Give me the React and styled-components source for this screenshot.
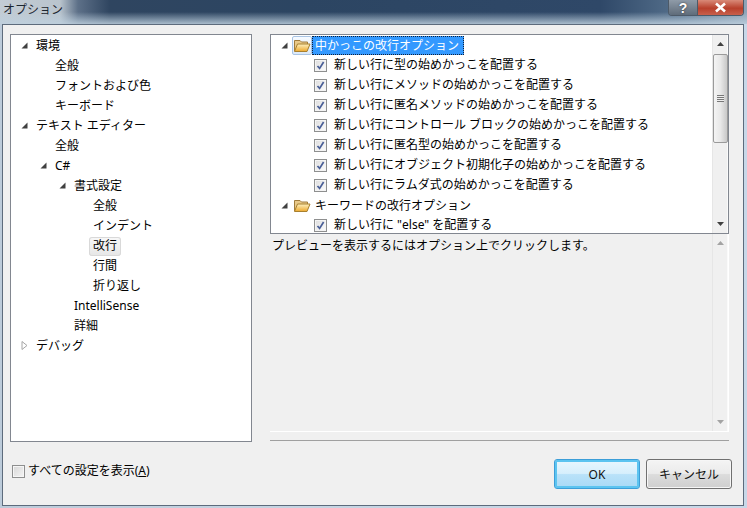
import React from "react";
import styled, { createGlobalStyle } from "styled-components";

const GlobalStyle = createGlobalStyle`
  html, body {
    margin: 0;
    padding: 0;
    background: #c4d4e4;
  }
  * {
    box-sizing: border-box;
  }
`;

const FONT = `"Noto Sans", "Noto Sans CJK JP", sans-serif`;

const StWindow = styled.div`
  width: 747px;
  height: 508px;
  display: flex;
  flex-direction: column;
  overflow: hidden;
  font-family: ${FONT};
  font-size: 12px;
  color: #000;
  background: linear-gradient(90deg, #bccbda 0%, #c6d4e2 40%, #c8d8e8 100%);
`;

const StTitleBar = styled.div`
  height: 24px;
  flex: none;
  display: flex;
  justify-content: space-between;
  background:
    linear-gradient(180deg, rgba(200, 214, 226, 0) 50%, rgba(190, 208, 222, 0.85) 100%),
    linear-gradient(90deg, #c3ccd4 0px, #b9c4cd 60px, #5d7088 78px, #2f4560 110px, #2c4562 300px, #2f4868 600px, #55708c 680px, #8fa5b8 747px);
`;

const StTitle = styled.div`
  padding: 1px 0 0 3px;
  font-size: 12px;
  line-height: 17px;
  color: #1c2630;
`;

const StCaption = styled.div`
  display: flex;
  height: 16px;
  margin-right: 3px;
  border: 1px solid #4d5a68;
  border-top: none;
  border-radius: 0 0 4px 4px;
  overflow: hidden;
`;

const StCaptionBtn = styled.div`
  width: ${(p) => p.$w}px;
  display: flex;
  align-items: center;
  justify-content: center;
  color: #fff;
  font-family: "Liberation Sans", sans-serif;
  font-weight: 700;
  font-size: 14px;
  line-height: 14px;
  text-shadow: 0 0 2px #333;
  background: ${(p) => p.$bg};
  & + & {
    border-left: 1px solid #4d5a68;
  }
`;

const StFrame = styled.div`
  height: 482px;
  margin: 0 3px 0 2px;
  border: 1px solid #5d6b7c;
  background: #f0f0f0;
  padding: 9px 13px 0 7px;
  display: flex;
  flex-direction: column;
`;

const StMain = styled.div`
  display: flex;
  gap: 18px;
  height: 408px;
  flex: none;
`;

const StTree = styled.div`
  width: 242px;
  flex: none;
  background: #fff;
  border: 1px solid #828790;
`;

const StTreeRow = styled.div`
  height: 20px;
  display: flex;
  align-items: center;
  padding-left: ${(p) => p.$level * 19 + 10}px;
  white-space: nowrap;
`;

const StArrowSlot = styled.span`
  width: 15px;
  flex: none;
  display: flex;
  align-items: center;
`;

const StTreeLabel = styled.span`
  align-self: flex-start;
  height: 19px;
  margin: 2px 0 0 -4px;
  padding: 0 4px;
  line-height: 18px;
  border-radius: 3px;
  ${(p) =>
    p.$selected &&
    `
    background: linear-gradient(180deg, #f8f8f8, #e6e6e6);
    box-shadow: inset 0 0 0 1px #d9d9d9;
  `}
`;

const StRight = styled.div`
  width: 459px;
  flex: none;
  display: flex;
  flex-direction: column;
`;

const StListBox = styled.div`
  height: 200px;
  flex: none;
  display: flex;
  background: #fff;
  border: 1px solid #828790;
`;

const StListBody = styled.div`
  flex: 1;
  overflow: hidden;
`;

const StGroupRow = styled.div`
  height: 20px;
  display: flex;
  align-items: center;
  padding-left: 10px;
  white-space: nowrap;
`;

const StFolderBox = styled.span`
  width: 20px;
  height: 19px;
  margin-left: 4px;
  flex: none;
  align-self: flex-end;
  display: flex;
  align-items: center;
  justify-content: center;
  border: 1px solid transparent;
  border-radius: 2px;
  ${(p) =>
    p.$selected &&
    `
    border-color: #a9c4e4;
    background: linear-gradient(180deg, #f6faff, #dbe9f9);
  `}
`;

const StGroupLabel = styled.span`
  height: 19px;
  align-self: flex-end;
  line-height: 20px;
  padding: 0 3px;
  ${(p) =>
    p.$selected &&
    `
    width: 152px;
    color: #fff;
    background: #3399ff;
    outline: 1px dotted #10203a;
    outline-offset: -1px;
  `}
`;

const StOptionRow = styled.div`
  height: 20px;
  display: flex;
  align-items: center;
  padding-left: 43px;
  gap: 7px;
  white-space: nowrap;
`;

const StOptionText = styled.span`
  line-height: 16px;
  margin-bottom: 1px;
`;

const StCheck = styled.span`
  width: 13px;
  height: 13px;
  flex: none;
  display: flex;
  align-items: center;
  justify-content: center;
  border: 1px solid #8e8f8f;
  background: linear-gradient(135deg, #dcdcdc, #f4f4f4 70%, #fff);
  box-shadow: inset 0 0 0 1px #f4f4f4;
`;

const StScrollBar = styled.div`
  width: 16px;
  flex: none;
  display: flex;
  flex-direction: column;
  align-items: center;
  background: #f0f0f0;
  border-left: 1px solid #e6e6e6;
  box-shadow: inset -1px 0 0 #fafafa;
`;

const StScrollBtn = styled.div`
  height: 18px;
  flex: none;
  width: 100%;
  display: flex;
  align-items: center;
  justify-content: center;
`;

const StThumb = styled.div`
  width: 15px;
  height: 89px;
  margin-top: 1px;
  flex: none;
  display: flex;
  align-items: center;
  justify-content: center;
  border: 1px solid #9a9a9a;
  border-radius: 2px;
  background: linear-gradient(90deg, #f4f4f4, #e8e8e8 50%, #c8c8c8);
`;

const StGrip = styled.div`
  width: 7px;
  height: 7px;
  background: repeating-linear-gradient(180deg, #777 0 1px, #eee 1px 2px);
`;

const StTrack = styled.div`
  flex: 1;
`;

const StPreview = styled.div`
  height: 198px;
  flex: none;
  display: flex;
  border-bottom: 1px solid #fff;
  border-right: 1px solid #fff;
`;

const StPreviewText = styled.div`
  flex: 1;
  padding: 3px 0 0 2px;
  line-height: 18px;
`;

const StRule = styled.div`
  height: 1px;
  flex: none;
  margin-top: 8px;
  background: #a0a0a0;
`;

const StFooter = styled.div`
  display: flex;
  align-items: flex-start;
  justify-content: space-between;
  padding: 17px 0 0 2px;
  margin-right: -2px;
  flex: 1;
`;

const StShowAll = styled.div`
  display: flex;
  align-items: center;
  gap: 3px;
  height: 14px;
  margin-top: 5px;
  white-space: nowrap;
`;

const StShowAllLabel = styled.span`
  margin-bottom: 2px;
`;

const StBlankCheck = styled.span`
  width: 13px;
  height: 13px;
  flex: none;
  border: 1px solid #8e8f8f;
  background: linear-gradient(135deg, #d8d8d8, #f4f4f4);
  box-shadow: inset 0 0 0 1px #f6f6f6;
`;

const StButtons = styled.div`
  display: flex;
  gap: 6px;
`;

const StButton = styled.button`
  width: 86px;
  height: 30px;
  padding: 0;
  font-family: ${FONT};
  font-size: 12px;
  color: #111;
  border-radius: 3px;
  border: 1px solid ${(p) => (p.$primary ? "#3c9ed8" : "#707070")};
  background: ${(p) =>
    p.$primary
      ? "linear-gradient(180deg, #e9f7fe 0%, #d6effc 48%, #b9e2f9 52%, #a8d9f6 100%)"
      : "linear-gradient(180deg, #f4f4f4 0%, #ebebeb 48%, #dcdcdc 52%, #cfcfcf 100%)"};
  box-shadow: ${(p) =>
    p.$primary ? "inset 0 0 0 2px #5cc4f0" : "inset 0 0 0 1px #f6f6f6"};
`;

const Expanded = () => (
  <svg width="7" height="7" viewBox="0 0 7 7">
    <polygon points="6.5,0.5 6.5,6.5 0.5,6.5" fill="#404040" />
  </svg>
);

const Collapsed = () => (
  <svg width="7" height="9" viewBox="0 0 7 9">
    <polygon points="1,0.5 6,4.5 1,8.5" fill="#fff" stroke="#a6a6a6" />
  </svg>
);

const Folder = ({ id }) => (
  <svg width="18" height="15" viewBox="0 0 18 15">
    <defs>
      <linearGradient id={id} x1="0" y1="0" x2="0" y2="1">
        <stop offset="0" stopColor="#fdf0c0" />
        <stop offset="1" stopColor="#eda92e" />
      </linearGradient>
    </defs>
    <path d="M1.5 13V2.5H7L8.5 4H14.5V6" fill="#e8c98a" stroke="#a07c3c" />
    <path d="M1.5 13.5L4.5 6H17L14 13.5Z" fill={`url(#${id})`} stroke="#a8802e" />
  </svg>
);

const Tick = () => (
  <svg width="9" height="9" viewBox="0 0 9 9">
    <path d="M1.5 5L3.6 7.4L7.6 1" fill="none" stroke="#4a5f97" strokeWidth="1.7" />
  </svg>
);

const CloseGlyph = () => (
  <svg width="13" height="11" viewBox="0 0 13 11">
    <path d="M2 1.5L11 9.5M11 1.5L2 9.5" stroke="#fff" strokeWidth="2.6" />
  </svg>
);

const ScrollArrow = ({ up, color }) => (
  <svg width="7" height="4" viewBox="0 0 7 4">
    <polygon points={up ? "3.5,0 7,4 0,4" : "0,0 7,0 3.5,4"} fill={color} />
  </svg>
);

const treeItems = [
  { label: "環境", level: 0, arrow: "open" },
  { label: "全般", level: 1 },
  { label: "フォントおよび色", level: 1 },
  { label: "キーボード", level: 1 },
  { label: "テキスト エディター", level: 0, arrow: "open" },
  { label: "全般", level: 1 },
  { label: "C#", level: 1, arrow: "open" },
  { label: "書式設定", level: 2, arrow: "open" },
  { label: "全般", level: 3 },
  { label: "インデント", level: 3 },
  { label: "改行", level: 3, selected: true },
  { label: "行間", level: 3 },
  { label: "折り返し", level: 3 },
  { label: "IntelliSense", level: 2 },
  { label: "詳細", level: 2 },
  { label: "デバッグ", level: 0, arrow: "closed" },
];

const braceOptions = [
  "新しい行に型の始めかっこを配置する",
  "新しい行にメソッドの始めかっこを配置する",
  "新しい行に匿名メソッドの始めかっこを配置する",
  "新しい行にコントロール ブロックの始めかっこを配置する",
  "新しい行に匿名型の始めかっこを配置する",
  "新しい行にオブジェクト初期化子の始めかっこを配置する",
  "新しい行にラムダ式の始めかっこを配置する",
];

const OptionRow = ({ text }) => (
  <StOptionRow>
    <StCheck>
      <Tick />
    </StCheck>
    <StOptionText>{text}</StOptionText>
  </StOptionRow>
);

const App = () => {
  return (
    <StWindow>
      <GlobalStyle />
      <StTitleBar>
        <StTitle>オプション</StTitle>
        <StCaption>
          <StCaptionBtn $w={28} $bg="linear-gradient(180deg, #8f9ba8, #5f6c7a)">
            ?
          </StCaptionBtn>
          <StCaptionBtn $w={46} $bg="linear-gradient(180deg, #d98a78, #b8402c 55%, #c8604c)">
            <CloseGlyph />
          </StCaptionBtn>
        </StCaption>
      </StTitleBar>
      <StFrame>
        <StMain>
          <StTree>
            {treeItems.map((item, i) => (
              <StTreeRow key={i} $level={item.level}>
                <StArrowSlot>
                  {item.arrow === "open" && <Expanded />}
                  {item.arrow === "closed" && <Collapsed />}
                </StArrowSlot>
                <StTreeLabel $selected={item.selected}>{item.label}</StTreeLabel>
              </StTreeRow>
            ))}
          </StTree>
          <StRight>
            <StListBox>
              <StListBody>
                <StGroupRow>
                  <Expanded />
                  <StFolderBox $selected>
                    <Folder id="folderA" />
                  </StFolderBox>
                  <StGroupLabel $selected>中かっこの改行オプション</StGroupLabel>
                </StGroupRow>
                {braceOptions.map((text) => (
                  <OptionRow key={text} text={text} />
                ))}
                <StGroupRow>
                  <Expanded />
                  <StFolderBox>
                    <Folder id="folderB" />
                  </StFolderBox>
                  <StGroupLabel>キーワードの改行オプション</StGroupLabel>
                </StGroupRow>
                <OptionRow text={'新しい行に "else" を配置する'} />
              </StListBody>
              <StScrollBar>
                <StScrollBtn>
                  <ScrollArrow up color="#404040" />
                </StScrollBtn>
                <StThumb>
                  <StGrip />
                </StThumb>
                <StTrack />
                <StScrollBtn>
                  <ScrollArrow color="#404040" />
                </StScrollBtn>
              </StScrollBar>
            </StListBox>
            <StPreview>
              <StPreviewText>プレビューを表示するにはオプション上でクリックします。</StPreviewText>
              <StScrollBar>
                <StScrollBtn>
                  <ScrollArrow up color="#a3a3a3" />
                </StScrollBtn>
                <StTrack />
                <StScrollBtn>
                  <ScrollArrow color="#a3a3a3" />
                </StScrollBtn>
              </StScrollBar>
            </StPreview>
            <StRule />
          </StRight>
        </StMain>
        <StFooter>
          <StShowAll>
            <StBlankCheck />
            <StShowAllLabel>
              すべての設定を表示(<u>A</u>)
            </StShowAllLabel>
          </StShowAll>
          <StButtons>
            <StButton $primary>OK</StButton>
            <StButton>キャンセル</StButton>
          </StButtons>
        </StFooter>
      </StFrame>
    </StWindow>
  );
};

export default App;
